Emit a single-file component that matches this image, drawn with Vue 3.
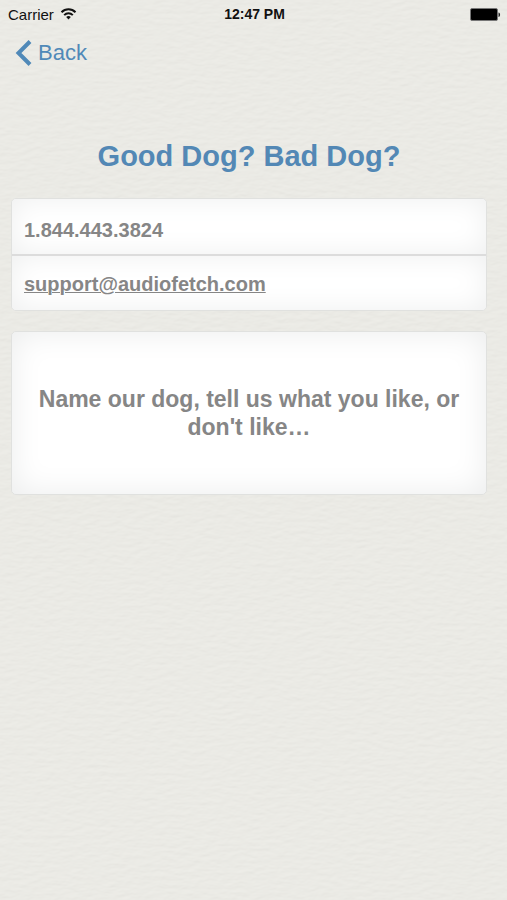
<script setup>
import { ref } from 'vue'

const phone = '1.844.443.3824'
const email = 'support@audiofetch.com'
const message = ref('')
</script>

<template>
  <div class="screen">
    <svg class="paper" aria-hidden="true">
      <filter id="grain" x="0" y="0" width="100%" height="100%" color-interpolation-filters="sRGB">
        <feTurbulence type="fractalNoise" baseFrequency="0.09 0.24" numOctaves="4" seed="8" result="noise" />
        <feDiffuseLighting in="noise" surfaceScale="0.5" lighting-color="#fff">
          <feDistantLight azimuth="250" elevation="62" />
        </feDiffuseLighting>
        <feColorMatrix
          type="matrix"
          values="0.14 0 0 0 0.796  0 0.14 0 0 0.794  0 0 0.14 0 0.774  0 0 0 1 0"
        />
      </filter>
      <rect width="100%" height="100%" filter="url(#grain)" />
    </svg>

    <header class="status">
      <div class="carrier">
        <span>Carrier</span>
        <svg width="17" height="14" viewBox="0 0 17 14" fill="none" stroke="#111" stroke-width="2" aria-hidden="true">
          <path d="M1.5 5.2C5.4 1.2 11.6 1.2 15.5 5.2" />
          <path d="M4.2 8.1C6.6 5.7 10.4 5.7 12.8 8.1" />
          <path d="M8.5 12.4L6.2 9.9C7.5 8.8 9.5 8.8 10.8 9.9Z" fill="#111" stroke="none" />
        </svg>
      </div>
      <time class="clock">12:47 PM</time>
      <svg class="battery" width="31" height="13" viewBox="0 0 31 13" aria-hidden="true">
        <rect x="0.5" y="0.5" width="27" height="12" rx="1.5" fill="#000" stroke="#777" />
        <path d="M28.5 4.5C30.6 5 30.6 8.5 28.5 9Z" fill="#222" />
      </svg>
    </header>

    <nav>
      <button type="button" class="back">
        <svg width="17" height="26" viewBox="0 0 17 26" fill="none" stroke="#5089b8" stroke-width="4" aria-hidden="true">
          <path d="M15 1.5L3.5 13L15 24.5" />
        </svg>
        <span>Back</span>
      </button>
    </nav>

    <main>
      <h1>Good Dog? Bad Dog?</h1>
      <address class="card contacts">
        <a class="row" href="tel:18444433824">{{ phone }}</a>
        <a class="row email" href="mailto:support@audiofetch.com">{{ email }}</a>
      </address>
      <textarea
        v-model="message"
        class="card message"
        rows="2"
        aria-label="Feedback"
        placeholder="Name our dog, tell us what you like, or don't like…"
      ></textarea>
    </main>
  </div>
</template>

<style>
body {
  background: #eaeae5;
}
</style>

<style scoped>
.screen {
  position: relative;
  min-height: 100vh;
  overflow: hidden;
  font-family: "Liberation Sans", Arial, sans-serif;
}

.paper {
  position: absolute;
  inset: 0;
  z-index: -1;
  width: 100%;
  height: 100%;
}

.status {
  display: grid;
  grid-template-columns: 1fr auto 1fr;
  align-items: center;
  height: 28px;
  padding: 0 6px 0 8px;
  font-size: 15px;
  color: #111;
}

.carrier {
  display: flex;
  align-items: center;
  gap: 6px;
}

.clock {
  font-size: 14px;
  font-weight: bold;
}

.battery {
  justify-self: end;
}

nav {
  display: flex;
  padding: 9px 15px 8px;
}

.back {
  display: flex;
  align-items: center;
  gap: 6px;
  height: 32px;
  padding: 0;
  border: 0;
  background: none;
  font-family: inherit;
  font-size: 22px;
  color: #5089b8;
}

main {
  padding: 59px 20px 0 11px;
}

h1 {
  margin: 0 0 22px;
  font-size: 29px;
  line-height: 40px;
  text-align: center;
  color: #5388b5;
}

.card {
  box-sizing: border-box;
  display: block;
  width: 100%;
  border: 1px solid #e0e1df;
  border-radius: 5px;
  background: #fff;
  color: #868686;
  font-family: inherit;
  font-style: normal;
  font-weight: bold;
}

.contacts {
  margin-bottom: 20px;
  overflow: hidden;
}

.row {
  display: block;
  padding: 7px 12px 0;
  font-size: 20px;
  line-height: 48px;
  color: inherit;
  text-decoration: none;
  box-shadow: inset 0 0 28px #eeefef;
}

.email {
  padding: 4px 12px 2px;
  border-top: 2px solid #dcdcdc;
  text-decoration: underline;
  text-decoration-thickness: 1px;
}

.message {
  height: 164px;
  padding: 53px 20px;
  resize: none;
  overflow: hidden;
  outline: none;
  font-size: 23px;
  line-height: 28px;
  text-align: center;
  box-shadow: inset 0 0 32px #ebecec;
}

.message::placeholder {
  color: #868686;
  opacity: 1;
}
</style>
